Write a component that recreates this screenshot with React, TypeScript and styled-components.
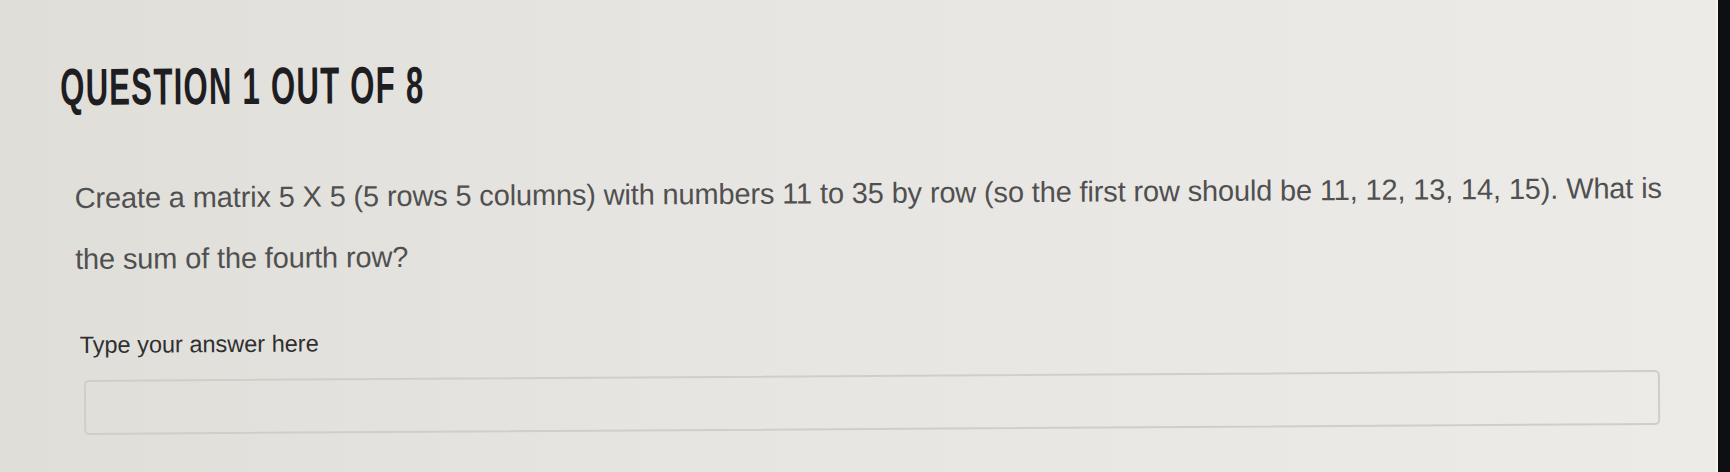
import React, { useState } from 'react';
import styled, { createGlobalStyle } from 'styled-components';

const GlobalStyle = createGlobalStyle`
  html, body {
    margin: 0;
    padding: 0;
    background: #0d0f12;
  }
  * {
    box-sizing: border-box;
  }
`;

const Page = styled.div`
  display: flex;
  width: 1730px;
  height: 472px;
  overflow: hidden;
`;

const Screen = styled.main`
  flex: 1;
  background: linear-gradient(90deg, #e0ded9 0%, #e7e5e1 40%, #ecebe7 100%);
  overflow: hidden;
`;

const Bezel = styled.div`
  width: 14px;
  background: #0d0f12;
  border-left: 2px solid #f4f4f1;
`;

const Content = styled.section`
  display: flex;
  flex-direction: column;
  padding: 52px 0 0 75px;
  transform: rotate(-0.36deg);
  transform-origin: 865px 236px;
`;

const Title = styled.h1`
  margin: 0 0 0 -14px;
  height: 60px;
  font-family: 'Liberation Sans', Arial, sans-serif;
  font-size: 52px;
  line-height: 60px;
  font-weight: 700;
  letter-spacing: 2px;
  color: #1e1e22;
  white-space: nowrap;

  span {
    display: inline-block;
    transform: scaleX(0.6);
    transform-origin: left center;
  }
`;

const Prompt = styled.p`
  margin: 51px 0 0 0;
  width: 1632px;
  font-family: 'Liberation Sans', Arial, sans-serif;
  font-size: 29px;
  line-height: 61px;
  letter-spacing: -0.15px;
  color: #505051;
`;

const Label = styled.label`
  display: block;
  margin: 41px 0 0 4px;
  font-family: 'Liberation Sans', Arial, sans-serif;
  font-size: 23.5px;
  line-height: 28px;
  color: #2f2f30;
`;

const AnswerInput = styled.input`
  margin: 21px 0 0 8px;
  width: 1576px;
  height: 55px;
  border: 2px solid #d0cec9;
  border-radius: 5px;
  background: transparent;
  font-family: 'Liberation Sans', Arial, sans-serif;
  font-size: 24px;
  padding: 0 14px;
  color: #2f2f30;

  &:focus {
    outline: none;
    border-color: #b9b7b2;
  }
`;

const App = () => {
  const [answer, setAnswer] = useState<string>('');

  return (
    <>
      <GlobalStyle />
      <Page>
        <Screen>
          <Content>
            <Title>
              <span>QUESTION 1 OUT OF 8</span>
            </Title>
            <Prompt>
              Create a matrix 5 X 5 (5 rows 5 columns) with numbers 11 to 35 by row (so the first
              row should be 11, 12, 13, 14, 15). What is the sum of the fourth row?
            </Prompt>
            <Label htmlFor="answer">Type your answer here</Label>
            <AnswerInput
              id="answer"
              type="text"
              value={answer}
              onChange={(e) => setAnswer(e.target.value)}
            />
          </Content>
        </Screen>
        <Bezel />
      </Page>
    </>
  );
};

export default App;
